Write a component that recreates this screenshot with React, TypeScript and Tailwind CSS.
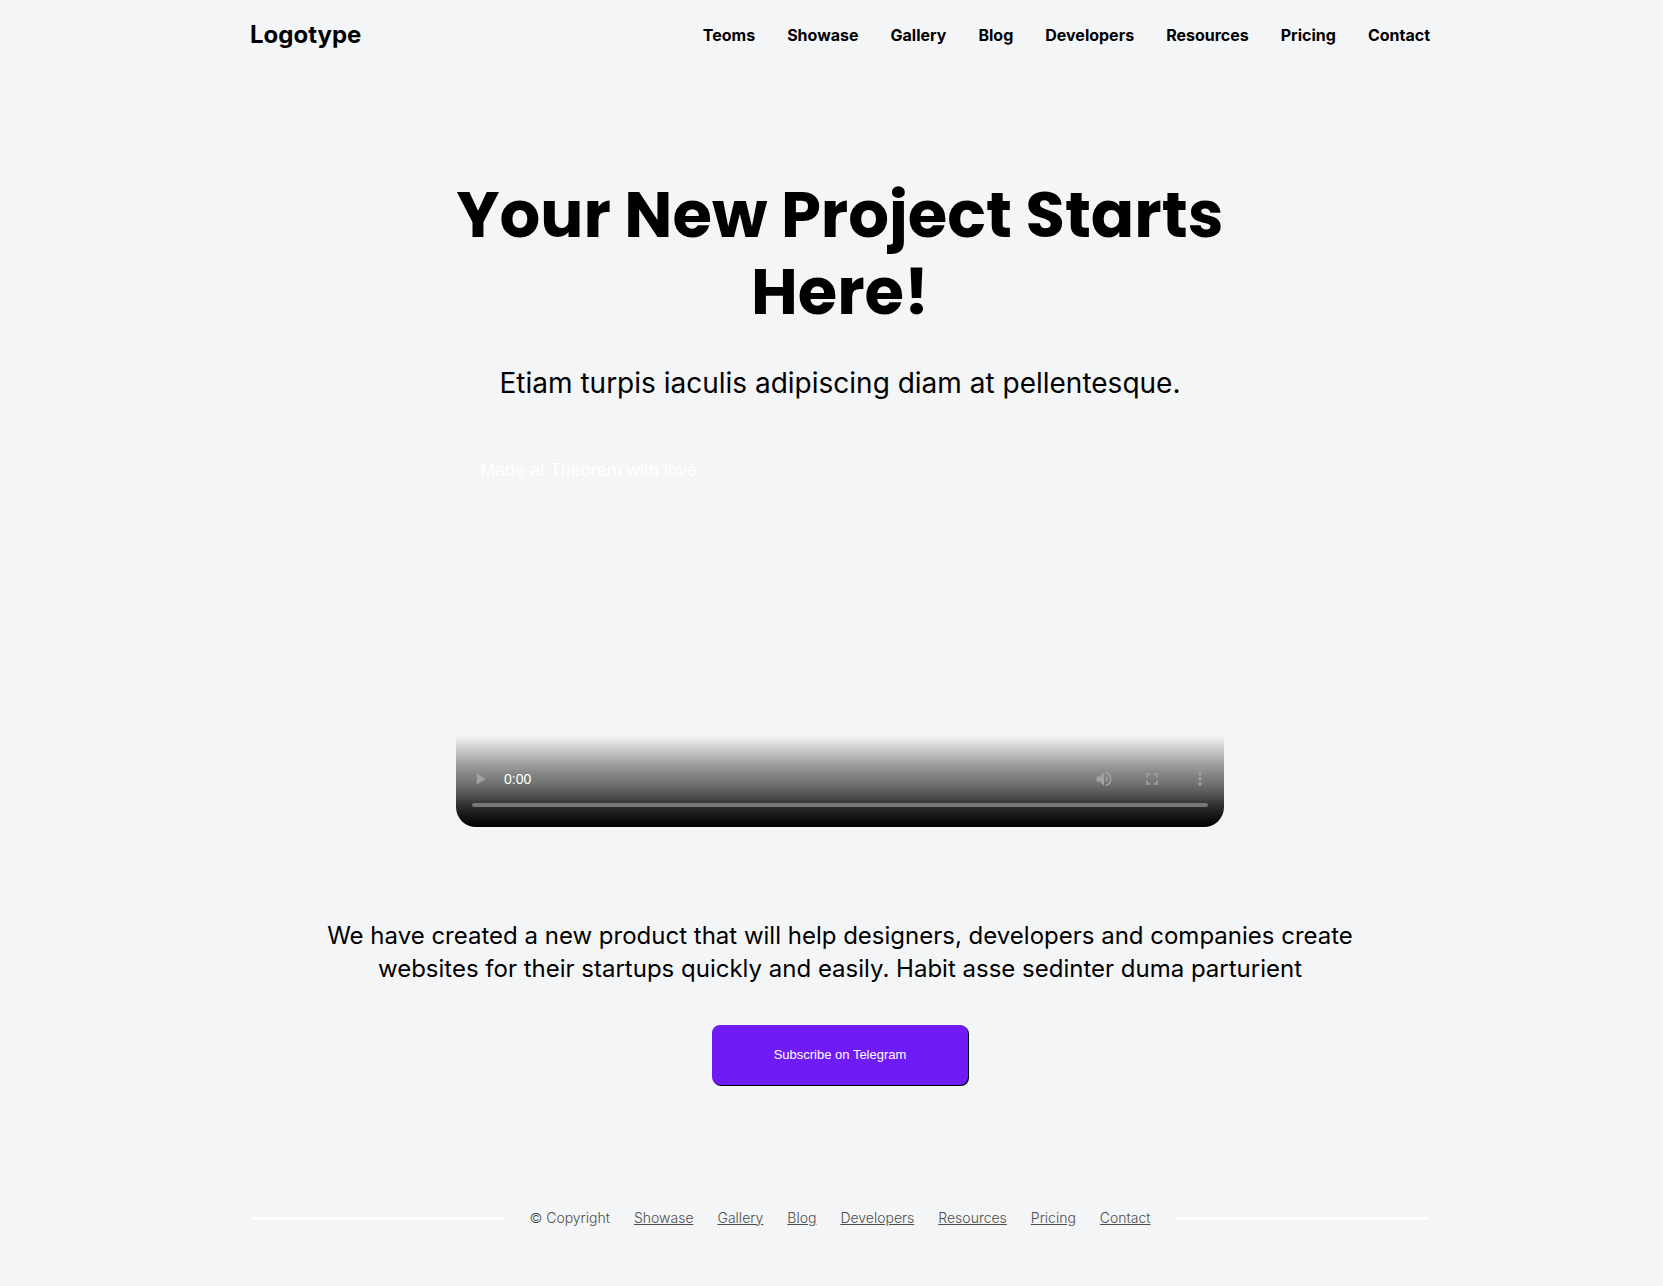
import type { ReactNode } from 'react';

const navLinks = ['Teoms', 'Showase', 'Gallery', 'Blog', 'Developers', 'Resources', 'Pricing', 'Contact'];
const footerLinks = navLinks.slice(1);

function Header() {
  return (
    <header className="flex h-[70px] items-center justify-between">
      <a href="#home" className="text-2xl font-bold">
        Logotype
      </a>
      <nav aria-label="Main" className="flex gap-8">
        {navLinks.map((label) => (
          <a key={label} href={`#${label.toLowerCase()}`} className="text-base font-bold">
            {label}
          </a>
        ))}
      </nav>
    </header>
  );
}

function ControlButton({ label, path }: { label: string; path: ReactNode }) {
  return (
    <button type="button" disabled aria-label={label} className="flex size-12 items-center justify-center text-[#a0a1a1]">
      <svg viewBox="0 0 24 24" fill="currentColor" className="size-5">
        {path}
      </svg>
    </button>
  );
}

function VideoPlayer() {
  return (
    <section
      aria-label="Video player"
      className="mt-10 flex h-[385px] w-full max-w-3xl flex-col justify-between overflow-hidden rounded-b-[20px] font-['Liberation_Sans',sans-serif] text-white"
    >
      <p className="px-6 pt-3.5 text-left text-lg leading-7">Made at Theorem with love</p>
      <div className="flex h-[92px] flex-col justify-end bg-[linear-gradient(#f4f5f7_0%,#c6c7c8_17%,#a8a9aa_28%,#858785_42%,#707273_53%,#4a4b4a_68%,#333_75%,#161616_88%,#000_100%)] pb-5">
        <div className="flex h-12 items-center">
          <ControlButton label="Play" path={<path d="M8 5v14l11-7z" />} />
          <span className="flex-1 text-left text-sm">0:00</span>
          <ControlButton
            label="Mute"
            path={
              <path d="M3 9v6h4l5 5V4L7 9H3zm13.5 3A4.5 4.5 0 0 0 14 7.97v8.05A4.48 4.48 0 0 0 16.5 12zM14 3.23v2.06a7 7 0 0 1 0 13.42v2.06a9 9 0 0 0 0-17.54z" />
            }
          />
          <ControlButton
            label="Full screen"
            path={<path d="M7 14H5v5h5v-2H7v-3zm-2-4h2V7h3V5H5v5zm12 7h-3v2h5v-5h-2v3zM14 5v2h3v3h2V5h-5z" />}
          />
          <ControlButton
            label="More options"
            path={
              <path d="M12 8a2 2 0 1 0 0-4 2 2 0 0 0 0 4zm0 2a2 2 0 1 0 0 4 2 2 0 0 0 0-4zm0 6a2 2 0 1 0 0 4 2 2 0 0 0 0-4z" />
            }
          />
        </div>
        <input
          type="range"
          aria-label="Seek"
          min={0}
          max={100}
          defaultValue={0}
          disabled
          className="mx-4 block h-1 appearance-none rounded-full bg-[#777] [&::-webkit-slider-thumb]:size-0 [&::-webkit-slider-thumb]:appearance-none"
        />
      </div>
    </section>
  );
}

function Footer() {
  return (
    <footer className="flex items-center gap-6 px-0.5 text-sm font-light text-[#4d4d4d]">
      <hr className="h-[3px] flex-1 border-0 bg-white" />
      <span>© Copyright</span>
      {footerLinks.map((label) => (
        <a key={label} href={`#${label.toLowerCase()}`} className="underline">
          {label}
        </a>
      ))}
      <hr className="h-[3px] flex-1 border-0 bg-white" />
    </footer>
  );
}

export default function App() {
  return (
    <div className="min-h-screen bg-[#f4f5f7] pb-12 pl-[17px] font-['Inter',sans-serif] text-black">
      <div className="mx-auto max-w-[1180px]">
        <Header />
        <main className="flex flex-col items-center text-center">
          <h1 className="mt-[106px] max-w-[780px] font-['Poppins','Inter',sans-serif] text-[64px] leading-[77px] font-bold">
            Your New Project Starts Here!
          </h1>
          <p className="mt-[34px] text-[28px] leading-[38px]">
            Etiam turpis iaculis adipiscing diam at pellentesque.
          </p>
          <VideoPlayer />
          <p className="mt-[92px] max-w-[1030px] text-2xl leading-[33px]">
            We have created a new product that will help designers, developers and companies create websites for their
            startups quickly and easily. Habit asse sedinter duma parturient
          </p>
          <button
            type="button"
            className="mt-10 h-[60px] w-64 rounded-lg bg-[#6f1bf6] font-['Liberation_Sans',sans-serif] text-[13px] text-white shadow-[1px_1px_0_#000]"
          >
            Subscribe on Telegram
          </button>
        </main>
        <div className="mt-[123px]">
          <Footer />
        </div>
      </div>
    </div>
  );
}
